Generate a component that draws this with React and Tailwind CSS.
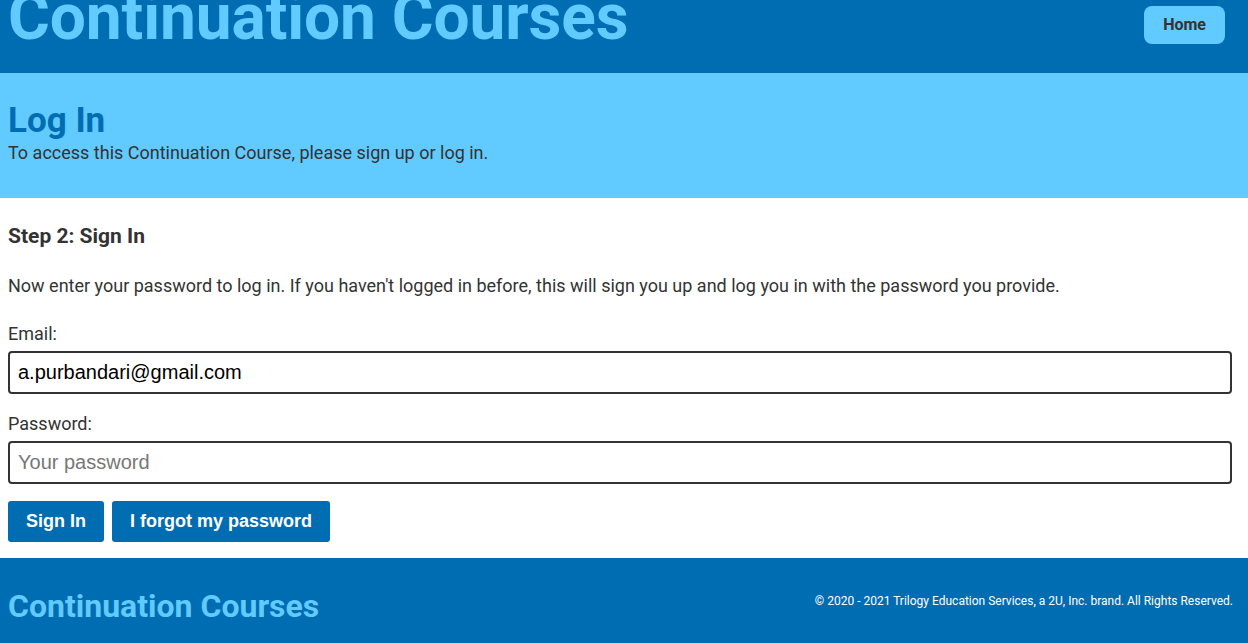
export default function App() {
  return (
    <div className="min-h-[643px] bg-white text-[#333] font-['Roboto',sans-serif]">
      <header className="h-[73px] bg-[#006db3] flex items-start justify-between px-2 overflow-hidden">
        <h1 className="text-[64px] font-bold leading-none text-[#61caff] -mt-[14px] tracking-[-0.1px]">Continuation Courses</h1>
        <button className="mt-[6px] mr-[15px] h-[38px] px-[19px] rounded-lg bg-[#61caff] text-[#333] font-bold text-[16px]">Home</button>
      </header>
      <section className="h-[125px] bg-[#61caff] px-2 pt-[28px]">
        <h2 className="text-[35px] font-bold leading-[40px] text-[#006db3]">Log In</h2>
        <p className="text-[18px] leading-[20px] mt-[2px]">To access this Continuation Course, please sign up or log in.</p>
      </section>
      <main className="px-2 pt-[24px] pb-[16px]">
        <h3 className="text-[21px] font-bold leading-[28px]">Step 2: Sign In</h3>
        <p className="mt-[22px] text-[18px] leading-[28px]">Now enter your password to log in. If you haven't logged in before, this will sign you up and log you in with the password you provide.</p>
        <label className="block mt-[23px] text-[18px] leading-[22px]">Email:</label>
        <input
          className="mt-[6px] block w-[1224px] h-[43px] border-2 border-[#333] rounded-[4px] px-[8px] text-[20px] text-black font-['Liberation_Sans',sans-serif]"
          defaultValue="a.purbandari@gmail.com"
        />
        <label className="block mt-[19px] text-[18px] leading-[22px]">Password:</label>
        <input
          type="password"
          placeholder="Your password"
          className="mt-[6px] block w-[1224px] h-[43px] border-2 border-[#333] rounded-[4px] px-[8px] text-[20px] text-black placeholder:text-[#777] font-['Liberation_Sans',sans-serif]"
        />
        <div className="mt-[17px] flex gap-2">
          <button className="h-[41px] w-[96px] rounded-[3px] bg-[#006db3] text-white font-bold text-[18px] font-['Liberation_Sans',sans-serif]">Sign In</button>
          <button className="h-[41px] w-[218px] rounded-[3px] bg-[#006db3] text-white font-bold text-[18px] font-['Liberation_Sans',sans-serif]">I forgot my password</button>
        </div>
      </main>
      <footer className="h-[85px] bg-[#006db3] flex items-center justify-between px-2">
        <div className="text-[32px] font-bold text-[#61caff] mt-[10px]">Continuation Courses</div>
        <div className="text-[12px] text-white mr-[7px]">© 2020 - 2021 Trilogy Education Services, a 2U, Inc. brand. All Rights Reserved.</div>
      </footer>
    </div>
  );
}
